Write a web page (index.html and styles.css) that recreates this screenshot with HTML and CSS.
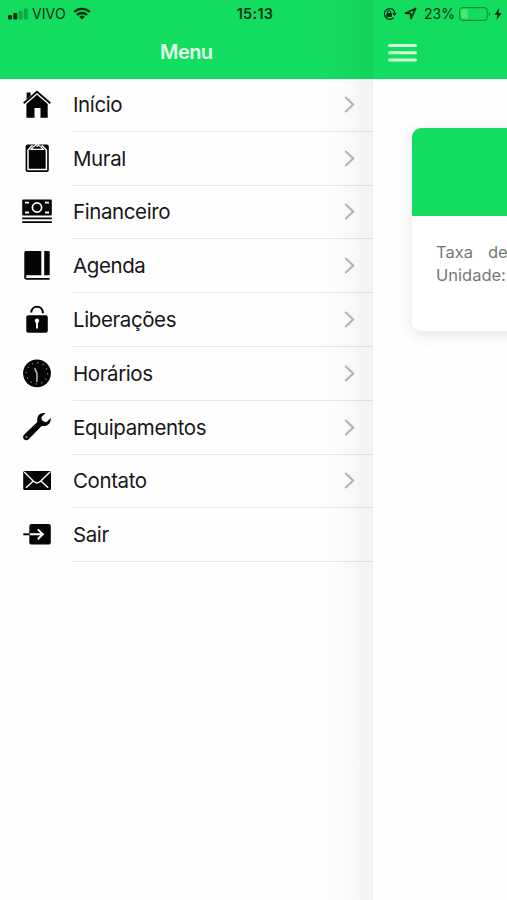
FILE: index.html
```html
<!DOCTYPE html>
<html lang="pt-BR">
<head>
    <meta charset="utf-8"/>
    <title>Menu</title>
    <link rel="stylesheet" href="styles.css">
</head>
<body>
    <!-- Barra de status -->
    <div class="status-bar">
        <div class="status-left">
            <svg class="signal" width="20" height="12" viewBox="0 0 20 12">
                <rect x="0" y="7" width="4" height="4.5" rx="1"/>
                <rect x="5.3" y="5" width="4" height="6.5" rx="1"/>
                <rect x="10.6" y="3" width="4" height="8.5" rx="1" opacity=".3"/>
                <rect x="15.8" y="0.5" width="4" height="11" rx="1" opacity=".3"/>
            </svg>
            <span class="carrier">VIVO</span>
            <svg class="wifi" width="18" height="13" viewBox="0 0 18 13">
                <path d="M1.2 5a11.3 11.3 0 0 1 15.6 0M4 8a7.2 7.2 0 0 1 10 0" fill="none" stroke="currentColor" stroke-width="2.4"/>
                <path d="M9 12.4 6.2 9.8a4.2 4.2 0 0 1 5.6 0z"/>
            </svg>
        </div>
        <div class="clock">15:13</div>
        <div class="status-right">
            <svg width="15" height="14" viewBox="0 0 15 14">
                <path d="M11.5 3A5.4 5.4 0 1 0 11.6 10.8M10.4 1.9A5.4 5.4 0 0 1 12.6 7" fill="none" stroke="currentColor" stroke-width="1.2"/>
                <path d="M10.2 6h4.4l-2.2 3z"/>
                <rect x="4.3" y="6" width="5.6" height="4" rx=".7"/>
                <path d="M5.5 6.5V5.2a1.6 1.6 0 0 1 3.2 0v1.3" fill="none" stroke="currentColor"/>
            </svg>
            <svg class="location" width="13" height="13" viewBox="0 0 13 13">
                <path d="M1.4 6.2 11.6 1.4 7 11.6 6.6 6.7z" fill="none" stroke="currentColor" stroke-width="1.7" stroke-linejoin="round"/>
            </svg>
            <span class="percent">23%</span>
            <svg class="battery" width="32" height="14" viewBox="0 0 32 14">
                <rect x=".6" y=".6" width="27.6" height="12.8" rx="3.2" fill="none" stroke="#086b2c" stroke-opacity=".65" stroke-width="1.1"/>
                <path d="M4.5 2.2h4.2v9.6H4.5a2.2 2.2 0 0 1-2.2-2.2V4.4a2.2 2.2 0 0 1 2.2-2.2z" fill="#4fe86c"/>
                <path d="M29.7 4.8c1.9.6 1.9 3.8 0 4.4z" fill="#086b2c" fill-opacity=".65"/>
            </svg>
            <svg class="bolt" width="8" height="12" viewBox="0 0 8 12">
                <path d="M5.3 0 .4 6.8h3L2.4 12l5.2-7.1H4.5z"/>
            </svg>
        </div>
    </div>

    <div class="app">
        <!-- Menu lateral -->
        <div class="menu">
            <div class="menu-header">Menu</div>
            <ul class="menu-list">
                <li>
                    <svg class="icon" viewBox="0 0 30 30">
                        <path d="M4.6 2.5h4v3.2L4.6 9.5z"/>
                        <path d="M1.7 13.2 15 1.7 28.3 13.2" fill="none" stroke="currentColor" stroke-width="1.9"/>
                        <path d="M15 4.7 25.7 14v13.8h-7.2V18h-6v9.8H4.4V14z"/>
                    </svg>
                    <div class="item">Início<svg class="arrow" viewBox="0 0 10 16"><path d="M1 1l7.5 7L1 15"/></svg></div>
                </li>
                <li>
                    <svg class="icon" viewBox="0 0 30 30">
                        <rect x="3.6" y="1.4" width="23.2" height="27.6" rx="2"/>
                        <path d="M10.5 2.2 6 7v19.6h18.4V7l-4.700-4.800" fill="none" stroke="#fff" stroke-width="1.5"/>
                        <path d="M9 6.300h12.200l-2.500-2.800-1.600-.6c-.7-2.700-3.300-2.700-4 0l-1.600.6z" stroke="#fff" stroke-width="1.200"/>
                        <circle cx="15.1" cy="3" r=".9" fill="#fff"/>
                    </svg>
                    <div class="item">Mural<svg class="arrow" viewBox="0 0 10 16"><path d="M1 1l7.5 7L1 15"/></svg></div>
                </li>
                <li>
                    <svg class="icon" viewBox="0 0 30 30">
                        <rect x=".2" y="2.5" width="29.6" height="16" rx="1"/>
                        <circle cx="15" cy="10.5" r="4.6" fill="none" stroke="#fff" stroke-width="1.7"/>
                        <path d="M3 5.6h4M3 15.5h4M23 5.6h4M23 15.5h4" stroke="#fff" stroke-width="1.8"/>
                        <path d="M.2 21.3h29.6M.2 25.1h29.6" stroke="currentColor" stroke-width="1.7"/>
                    </svg>
                    <div class="item">Financeiro<svg class="arrow" viewBox="0 0 10 16"><path d="M1 1l7.5 7L1 15"/></svg></div>
                </li>
                <li>
                    <svg class="icon" viewBox="0 0 30 30">
                        <path d="M4 0h15.3v24.3H4.4L2.3 26V1.7C2.3.7 3 0 4 0zM22.2 0h4.5c.6 0 1 .4 1 1v22.3c0 .6-.4 1-1 1h-4.5z"/>
                        <path d="M27.6 27.9H4.5c-2.2 0-2.2-2.6 0-2.6" fill="none" stroke="currentColor" stroke-width="1.6"/>
                    </svg>
                    <div class="item">Agenda<svg class="arrow" viewBox="0 0 10 16"><path d="M1 1l7.5 7L1 15"/></svg></div>
                </li>
                <li>
                    <svg class="icon" viewBox="0 0 30 30">
                        <rect x="4.3" y="10.2" width="21.5" height="17.6" rx="2"/>
                        <path d="M9.3 7.5c0-7.6 11.5-7.6 11.5 0v.8" fill="none" stroke="currentColor" stroke-width="2"/>
                        <circle cx="15" cy="15.7" r="2.2" fill="#fff"/>
                        <path d="M15 15.5v8" stroke="#fff" stroke-width="1.9"/>
                    </svg>
                    <div class="item">Liberações<svg class="arrow" viewBox="0 0 10 16"><path d="M1 1l7.5 7L1 15"/></svg></div>
                </li>
                <li>
                    <svg class="icon" viewBox="0 0 30 30">
                        <circle cx="15" cy="14.3" r="13.9"/>
                        <circle cx="15" cy="14.3" r="10.6" fill="none" stroke="#999" stroke-width="1.2" stroke-dasharray="1.1 4.45"/>
                        <path d="M12.6 9.4 15 14.5v8.5" fill="none" stroke="#bbb" stroke-width="1.5"/>
                    </svg>
                    <div class="item">Horários<svg class="arrow" viewBox="0 0 10 16"><path d="M1 1l7.5 7L1 15"/></svg></div>
                </li>
                <li>
                    <svg class="icon" viewBox="0 0 30 30">
                        <path d="M23.5 1.2c-4.5-1.4-8.9 2.3-8.2 7.3.1 1-.1 1.5-.8 2.2L2 22.7c-3 3.3 1.7 7.7 4.7 4.6l12.2-12.6c.7-.7 1.3-.9 2.2-.8 4.6.6 8.3-3.4 7.6-7.8l-3.8 3.7c-3.5 1-6.6-2.5-5.2-5.1z"/>
                        <circle cx="4.4" cy="24.9" r="1" fill="#999"/>
                    </svg>
                    <div class="item">Equipamentos<svg class="arrow" viewBox="0 0 10 16"><path d="M1 1l7.5 7L1 15"/></svg></div>
                </li>
                <li>
                    <svg class="icon" viewBox="0 0 30 30">
                        <rect x="1.2" y="4.9" width="27.8" height="19" rx="1.5"/>
                        <path d="M2.2 6 11.5 15.3c2.3 2.1 4.7 2.1 7 0L28 6M4 21.8l7-6.5M26.2 21.8l-7-6.5" fill="none" stroke="#fff" stroke-width="1.4"/>
                    </svg>
                    <div class="item">Contato<svg class="arrow" viewBox="0 0 10 16"><path d="M1 1l7.5 7L1 15"/></svg></div>
                </li>
                <li>
                    <svg class="icon" viewBox="0 0 30 30">
                        <rect x="7.3" y="3.9" width="21.5" height="20.7" rx="2.2"/>
                        <path d="M7.3 14.3h14.5M15.8 9.4l5 4.9-5 4.9" fill="none" stroke="#fff" stroke-width="1.9"/>
                        <path d="M1.3 14.3h6.5" stroke="currentColor" stroke-width="2"/>
                    </svg>
                    <div class="item">Sair</div>
                </li>
            </ul>
            <div class="menu-shadow"></div>
        </div>

        <!-- Página principal -->
        <div class="page">
            <div class="page-header">
                <svg width="30" height="20" viewBox="0 0 30 20">
                    <path d="M1.5 2.5h26M1.5 9.8h26M1.5 17h26" stroke="#d0ffda" stroke-width="3" stroke-linecap="round"/>
                </svg>
            </div>
            <div class="card">
                <div class="card-top"></div>
                <div class="card-body">
                    <div class="taxa"><span>Taxa</span><span>de</span></div>
                    <div>Unidade:</div>
                </div>
            </div>
        </div>
    </div>
</body>
</html>
```
FILE: styles.css
```css
* {
    box-sizing: border-box;
}
body {
    margin: 0;
    width: 507px;
    height: 900px;
    overflow: hidden;
    position: relative;
    background-color: #fefefe;
    font-family: Inter, "Liberation Sans", sans-serif;
}

/* Barra de status */
.status-bar {
    position: absolute;
    top: 0;
    left: 0;
    z-index: 2;
    width: 507px;
    height: 27px;
    padding: 0 5px 0 8px;
    display: grid;
    grid-template-columns: 1fr auto 1fr;
    align-items: center;
    color: #05300f;
    font-size: 14px;
}
.status-bar svg {
    fill: currentColor;
    flex-shrink: 0;
}
.status-left,
.status-right {
    display: flex;
    align-items: center;
}
.status-right {
    justify-content: flex-end;
}
.carrier {
    margin: 0 7px 0 4px;
    letter-spacing: 0.1px;
}
.clock {
    font-weight: 600;
    font-size: 14.5px;
    letter-spacing: 0.3px;
}
.location {
    margin: 0 7px;
}
.battery {
    margin: 0 3px 0 4px;
}

.app {
    display: flex;
    height: 900px;
}

/* Menu lateral */
.menu {
    position: relative;
    width: 372.5px;
    flex-shrink: 0;
}
.menu-header {
    height: 79px;
    padding-top: 26px;
    background-color: #13dd60;
    color: #e0ffe6;
    font-size: 20px;
    font-weight: 600;
    letter-spacing: -0.6px;
    line-height: 52px;
    text-align: center;
}
.menu-list {
    list-style: none;
    margin: -1px 0 0;
    padding: 0;
}
.menu-list li {
    display: flex;
    height: 53.8px;
    padding-left: 22px;
}
.icon {
    width: 30px;
    height: 30px;
    margin: 11.7px 21px 0 0;
    flex-shrink: 0;
    fill: currentColor;
    color: #050505;
}
.item {
    flex: 1;
    display: flex;
    align-items: center;
    justify-content: space-between;
    padding-right: 17.5px;
    border-bottom: 1.5px solid #e6e6e6;
    color: #171717;
    font-size: 20.5px;
    letter-spacing: -0.4px;
}
.arrow {
    width: 11px;
    height: 17px;
    fill: none;
    stroke: #b5b5b5;
    stroke-width: 1.9;
}
.menu-shadow {
    position: absolute;
    top: 0;
    right: 0;
    bottom: 0;
    width: 56px;
    background: linear-gradient(to right, rgba(0,0,0,0), rgba(0,0,0,0.012) 45%, rgba(0,0,0,0.048));
}

/* Página principal */
.page {
    flex: 1;
    overflow: hidden;
}
.page-header {
    height: 79px;
    padding: 43px 0 0 15px;
    background-color: #13dd60;
}
.card {
    width: 300px;
    height: 203px;
    margin: 49px 0 0 39.5px;
    border-radius: 9px;
    background-color: #fff;
    box-shadow: 0 4px 16px rgba(0,0,0,0.1);
}
.card-top {
    height: 88px;
    border-radius: 9px 9px 0 0;
    background-color: #13dd60;
}
.card-body {
    padding: 25px 24px;
    color: #777;
    font-size: 16.5px;
    line-height: 23px;
}
.taxa {
    display: flex;
    gap: 15px;
}
```
